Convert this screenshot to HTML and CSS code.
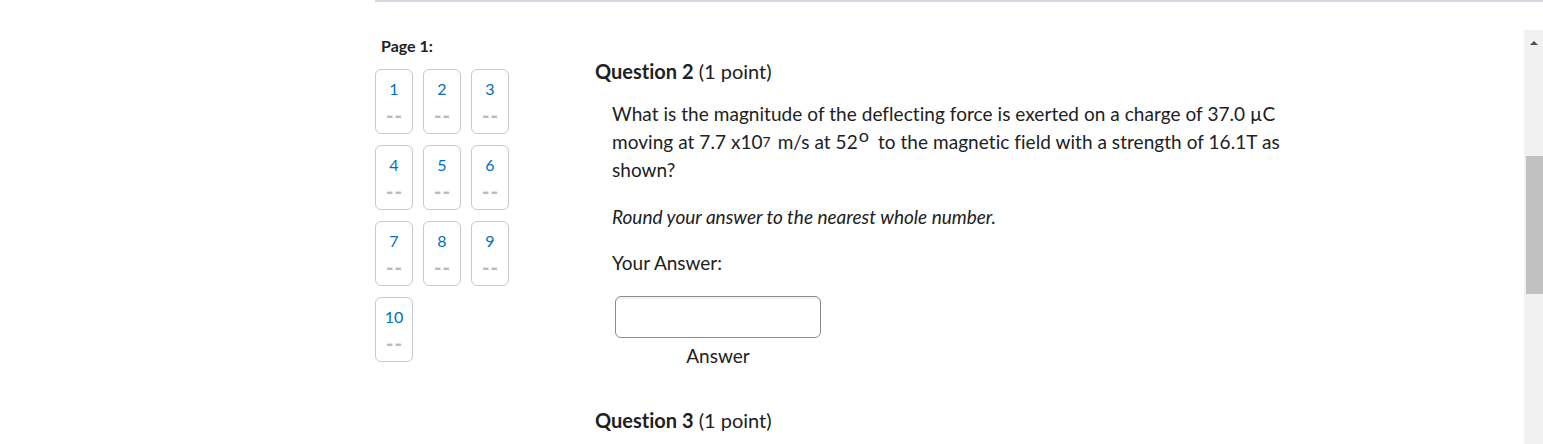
FILE: index.html
```html
<!DOCTYPE html>
<html lang="en">
<head>
<meta charset="utf-8">
<title>Quiz</title>
<link rel="stylesheet" href="styles.css">
</head>
<body>
<div class="rule"></div>
<div class="page">
  <div class="main">
    <nav class="qnav">
      <div class="page-label">Page 1:</div>
      <div class="tiles">
        <a class="tile"><span class="num">1</span><span class="dash">--</span></a>
        <a class="tile"><span class="num">2</span><span class="dash">--</span></a>
        <a class="tile"><span class="num">3</span><span class="dash">--</span></a>
        <a class="tile"><span class="num">4</span><span class="dash">--</span></a>
        <a class="tile"><span class="num">5</span><span class="dash">--</span></a>
        <a class="tile"><span class="num">6</span><span class="dash">--</span></a>
        <a class="tile"><span class="num">7</span><span class="dash">--</span></a>
        <a class="tile"><span class="num">8</span><span class="dash">--</span></a>
        <a class="tile"><span class="num">9</span><span class="dash">--</span></a>
        <a class="tile"><span class="num">10</span><span class="dash">--</span></a>
      </div>
    </nav>
    <section class="questions">
      <h2 class="qtitle"><strong>Question 2</strong> (1 point)</h2>
      <div class="qbody">
        <p class="stem">What is the magnitude of the deflecting force is exerted on a charge of 37.0 µC moving at 7.7 x10<sup class="exp">7</sup> m/s at 52<sup class="deg">o</sup> to the magnetic field with a strength of 16.1T as shown?</p>
        <p class="hint">Round your answer to the nearest whole number.</p>
        <p class="your">Your Answer:</p>
        <div class="answer">
          <input class="field" type="text" aria-label="Answer">
          <div class="alabel">Answer</div>
        </div>
      </div>
      <h2 class="qtitle q3"><strong>Question 3</strong> (1 point)</h2>
    </section>
  </div>
  <div class="scrollbar">
    <div class="arrow"></div>
    <div class="thumb"></div>
  </div>
</div>
</body>
</html>
```

FILE: styles.css
```css
html, body {
  margin: 0;
  padding: 0;
  background: #fff;
  overflow: hidden;
}
body {
  font-family: Lato, "Open Sans", sans-serif;
  font-variant-ligatures: none;
  color: #202122;
  width: 1543px;
  height: 444px;
}
.rule {
  margin-left: 375px;
  height: 2px;
  background: #d3d9e0;
}
.page {
  display: flex;
  height: 442px;
}
.main {
  flex: 1;
  display: flex;
  padding-left: 375px;
}
.qnav {
  width: 220px;
  flex: none;
}
.page-label {
  font-size: 16px;
  font-weight: 700;
  padding-left: 6px;
  margin-top: 34px;
  line-height: 20px;
}
.tiles {
  display: grid;
  grid-template-columns: repeat(3, 38px);
  column-gap: 10px;
  row-gap: 11px;
  margin-top: 13px;
}
.tile {
  box-sizing: border-box;
  height: 65px;
  border: 1px solid #c6cbcf;
  border-radius: 6px;
  display: flex;
  flex-direction: column;
  align-items: center;
}
.num {
  color: #006fbf;
  font-size: 16px;
  line-height: 18px;
  margin-top: 10px;
}
.dash {
  color: #b6bbbf;
  font-size: 20px;
  font-weight: 900;
  letter-spacing: 1px;
  line-height: 14px;
  margin-top: 10px;
  padding-left: 1px;
}
.questions {
  flex: 1;
}
.qtitle {
  font-size: 20px;
  font-weight: 400;
  margin: 57px 0 0 0;
  line-height: 24px;
}
.qtitle strong {
  font-weight: 700;
}
.q3 {
  margin-top: 40px;
}
.qbody {
  padding-left: 17px;
  width: 700px;
}
.stem {
  font-size: 19px;
  letter-spacing: 0.05px;
  line-height: 28px;
  margin: 17px 0 0 0;
}
sup {
  font-size: 15px;
  line-height: 0;
  vertical-align: 6px;
}
sup.exp {
  font-size: 14px;
  vertical-align: 2px;
  padding-right: 2px;
}
sup.deg {
  font-size: 18px;
  vertical-align: 7px;
  padding-right: 4px;
  padding-left: 1px;
}
.hint {
  font-size: 19px;
  font-style: italic;
  line-height: 28px;
  margin: 19px 0 0 0;
}
.your {
  font-size: 19px;
  line-height: 28px;
  margin: 18px 0 0 0;
}
.answer {
  width: 206px;
  margin-left: 3px;
  margin-top: 19px;
  display: flex;
  flex-direction: column;
  align-items: center;
}
.field {
  box-sizing: border-box;
  width: 206px;
  height: 42px;
  border: 1px solid #868c8f;
  border-radius: 6px;
  box-shadow: inset 0 2px 0 0 rgba(177, 185, 190, 0.2);
  margin: 0;
  padding: 0 10px;
  outline: none;
}
.alabel {
  font-size: 19px;
  line-height: 24px;
  margin-top: 6px;
}
.scrollbar {
  width: 19px;
  flex: none;
  margin-top: 28px;
  height: 414px;
  background: #f1f1f1;
  position: relative;
}
.arrow {
  position: absolute;
  left: 6px;
  top: 11px;
  width: 0;
  height: 0;
  border-left: 4px solid transparent;
  border-right: 4px solid transparent;
  border-bottom: 4px solid #505050;
}
.thumb {
  position: absolute;
  left: 2px;
  right: 0;
  top: 126px;
  height: 138px;
  background: #c1c1c1;
}
```
